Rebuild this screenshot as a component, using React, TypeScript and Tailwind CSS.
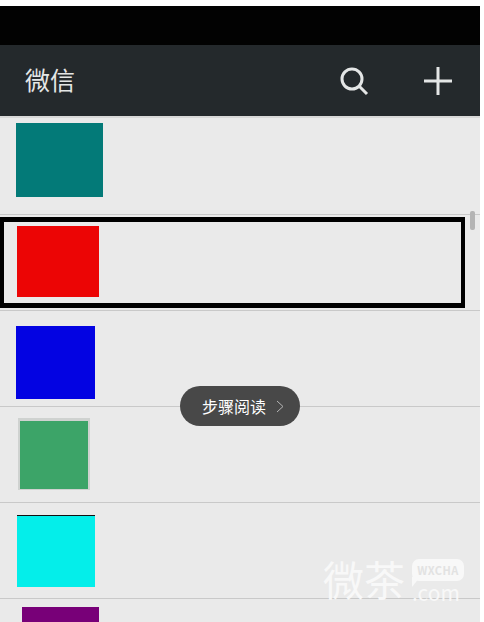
const rows = [
  { id: "teal", row: "h-[97px] pt-[5px]", thumb: "ml-[16px] h-[74px] w-[87px] bg-[#037a78]" },
  { id: "red", row: "h-[96px] pt-[11px]", thumb: "ml-[17px] h-[71px] w-[82px] bg-[#ec0505]" },
  { id: "blue", row: "h-[96px] pt-[15px]", thumb: "ml-[16px] h-[73px] w-[79px] bg-[#0303e2]" },
  { id: "green", row: "h-[96px] pt-[11px]", thumb: "ml-[18px] h-[72px] w-[72px] border-x-2 border-b border-t-[3px] border-[#cfd2d0] bg-[#3ca468]" },
  { id: "cyan", row: "h-[96px] pt-[12px]", thumb: "ml-[17px] h-[72px] w-[78px] border-t border-[#111] bg-[#04eeea]" },
];

export default function App() {
  return (
    <div className="relative h-[622px] w-[484px] overflow-hidden bg-white pt-[6px] font-['Noto_Sans_CJK_SC',sans-serif]">
      <div className="w-[480px]">
        {/* STATUS BAR */}
        <div className="h-[39px] bg-[#020202]" />

        {/* TOP BAR */}
        <header className="flex h-[71px] items-center bg-[#24292c] pl-[25px] pr-[27px] text-[#e4e6e6]">
          <p className="mb-[3px] text-[25px] font-normal leading-none">微信</p>
          <svg className="ml-auto h-[30px] w-[30px]" viewBox="0 0 30 30" fill="none" stroke="currentColor" strokeWidth="3">
            <circle cx="13" cy="13" r="10" />
            <path d="M20.5 20.5 L28 28" />
          </svg>
          <svg className="ml-[54px] h-[30px] w-[30px]" viewBox="0 0 30 30" fill="none" stroke="currentColor" strokeWidth="3">
            <path d="M15 1 V29 M1 15 H29" />
          </svg>
        </header>

        {/* LIST */}
        <div className="h-[2px] bg-[#d8d8d8]" />
        <main className="h-[504px] bg-[#eaeaea]">
          {rows.map((item) => (
            <div key={item.id} className={`${item.row} border-b border-[#c9c9c9]`}>
              <div className={item.thumb} />
            </div>
          ))}
          <div className="pt-[8px]">
            <div className="ml-[22px] h-[16px] w-[77px] bg-[#780078]" />
          </div>
        </main>
      </div>

      {/* HIGHLIGHT */}
      <div className="absolute left-0 top-[217px] h-[91px] w-[465px] border-x-[4px] border-y-[5px] border-black" />

      {/* SCROLLBAR */}
      <div className="absolute left-[470px] top-[211px] h-[19px] w-[5px] rounded-[2px] bg-[#b4b4b4]" />

      {/* STEP READER PILL */}
      <div className="absolute left-[180px] top-[386px] flex h-[40px] w-[120px] items-center rounded-[20px] bg-[#484848] pl-[22px] text-white">
        <span className="text-[16px] leading-none">步骤阅读</span>
        <svg className="ml-[10px] h-[13px] w-[8px]" viewBox="0 0 8 13" fill="none" stroke="#b5b5b5" strokeWidth="1">
          <path d="M1 1 L7 6.5 L1 12" />
        </svg>
      </div>

      {/* WATERMARK */}
      <div className="absolute left-[323px] top-[556px] flex items-start text-[#f8f8f8]">
        <span className="text-[41px] font-normal leading-[44px]">微茶</span>
        <div className="ml-[7px] flex flex-col items-start">
          <div className="relative mt-[3px] flex h-[22px] w-[52px] items-center justify-center rounded-[7px] bg-[#f8f8f8] text-[11px] font-bold leading-none tracking-[0.5px] text-[#e2e2e2]">
            WXCHA
            <svg className="absolute left-0 top-[18px] h-[10px] w-[8px]" viewBox="0 0 8 10" fill="#f8f8f8">
              <path d="M0 0 H8 L0 10 Z" />
            </svg>
          </div>
          <span className="text-[21px] leading-[22px]">.com</span>
        </div>
      </div>
    </div>
  );
}
